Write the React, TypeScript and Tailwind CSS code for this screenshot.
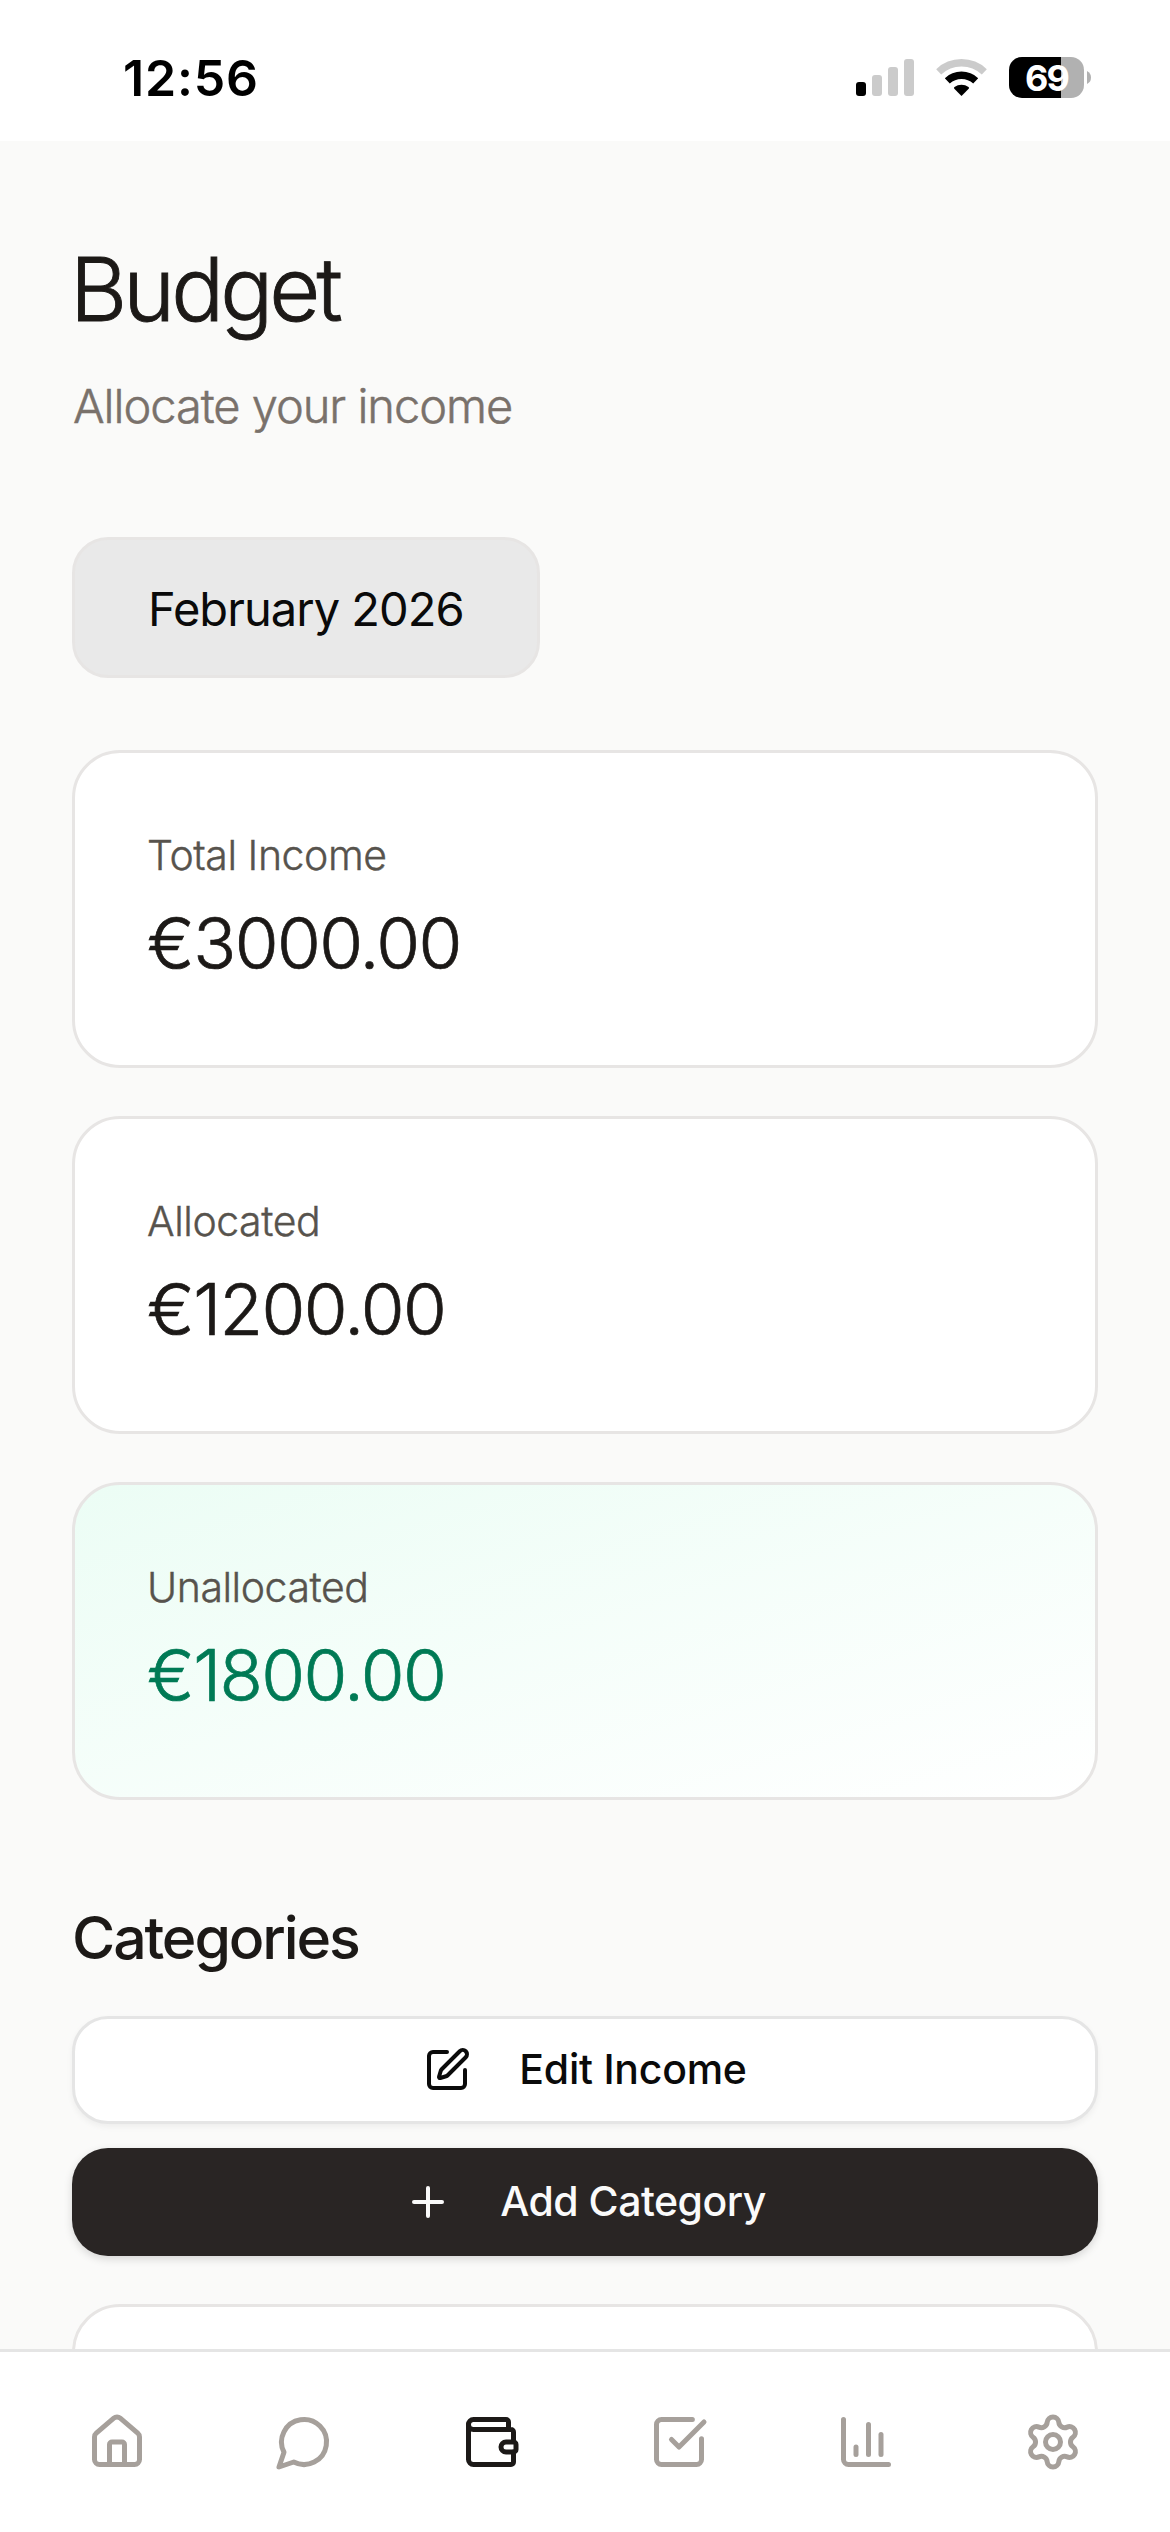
import React from "react";
import { ChartColumn, House, Plus, Settings, SquareCheckBig, SquarePen, Wallet } from "lucide-react";

const SignalIcon: React.FC = () => (
  <svg width="58" height="37" viewBox="0 0 58 37">
    <rect x="0" y="23" width="10" height="14" rx="3" fill="#000" />
    <rect x="16" y="16" width="10" height="21" rx="3" fill="#cbcbcb" />
    <rect x="32" y="8" width="10" height="29" rx="3" fill="#cbcbcb" />
    <rect x="48" y="0" width="10" height="37" rx="3" fill="#cbcbcb" />
  </svg>
);

const WifiIcon: React.FC = () => (
  <svg width="51" height="37" viewBox="0 0 51 37" fill="none" strokeWidth="7.3">
    <path d="M2.7 12.8a33.3 33.3 0 0 1 45.6 0" stroke="#cbcbcb" />
    <path d="M11.3 21.9a20.7 20.7 0 0 1 28.4 0" stroke="#000" />
    <path d="M25.5 37l-7.2-7.2q-.8-.9.2-1.7a11.6 11.6 0 0 1 14 0q1 .8.2 1.7z" fill="#000" />
  </svg>
);

const BatteryIcon: React.FC = () => (
  <div className="flex items-center">
    <div className="flex h-[41px] w-[75px] items-center justify-center rounded-[13px] bg-[linear-gradient(to_right,#000_52px,#b1b1b1_52px)]">
      <span className="text-[36px] leading-none font-bold tracking-[-1.8px] text-white">69</span>
    </div>
    <svg className="ml-[3px]" width="4" height="13" viewBox="0 0 4 13">
      <path d="M0 0q4 2 4 6.500q0 4.500-4 6.500z" fill="#b1b1b1" />
    </svg>
  </div>
);

const ChatIcon: React.FC = () => (
  <svg
    className="h-[60px] w-[60px]"
    viewBox="0 0 24 24"
    fill="none"
    stroke="currentColor"
    strokeWidth="2"
    strokeLinecap="round"
    strokeLinejoin="round"
  >
    <path d="M7.9 20A9 9 0 1 0 4 16.1L2 22Z" />
  </svg>
);

interface SummaryCardProps {
  label: string;
  amount: string;
  highlight?: boolean;
}

const SummaryCard: React.FC<SummaryCardProps> = ({ label, amount, highlight }) => (
  <div
    className={`h-[318px] rounded-[48px] border-[3px] border-stone-200 px-[72px] pt-[72px] ${
      highlight ? "bg-linear-to-br from-emerald-50 to-white" : "bg-white"
    }`}
  >
    <p className="text-[41px] leading-[60px] font-light tracking-[-0.45px] text-stone-600 [-webkit-text-stroke:0.4px]">
      {label}
    </p>
    <p
      className={`mt-[10px] text-[71px] leading-[96px] font-light tracking-[-1.6px] [-webkit-text-stroke:0.7px] ${
        highlight ? "text-emerald-700" : "text-stone-900"
      }`}
    >
      {amount}
    </p>
  </div>
);

export default function App() {
  return (
    <div className="flex h-[2532px] w-[1170px] flex-col overflow-hidden bg-stone-50 font-['Inter',sans-serif]">
      <header className="flex h-[141px] shrink-0 items-start justify-between bg-white pr-[79px] pl-[123px]">
        <span className="mt-[48px] text-[50px] leading-[60px] font-semibold tracking-[0.8px] text-black">12:56</span>
        <div className="mt-[57px] flex items-center">
          <SignalIcon />
          <div className="ml-[22px]">
            <WifiIcon />
          </div>
          <div className="ml-[22px]">
            <BatteryIcon />
          </div>
        </div>
      </header>

      <main className="min-h-0 flex-1 overflow-hidden px-[72px] pt-[94px]">
        <h1 className="-ml-[2px] text-[88px] leading-[108px] font-light tracking-[-3.9px] text-stone-900 [-webkit-text-stroke:0.9px]">
          Budget
        </h1>
        <p className="mt-[27px] ml-px text-[47px] leading-[72px] font-light tracking-[-1.04px] text-stone-500 [-webkit-text-stroke:0.5px]">
          Allocate your income
        </p>

        <button className="mt-[95px] flex h-[141px] w-[468px] items-center rounded-[36px] border-[3px] border-stone-200 bg-[#e9e9e9] pt-[3px] pl-[73px] text-[47px] tracking-[-0.96px] whitespace-nowrap text-neutral-950">
          February 2026
        </button>

        <div className="mt-[72px] flex flex-col gap-[48px]">
          <SummaryCard label="Total Income" amount="€3000.00" />
          <SummaryCard label="Allocated" amount="€1200.00" />
          <SummaryCard label="Unallocated" amount="€1800.00" highlight />
        </div>

        <h2 className="mt-[96px] text-[59px] leading-[84px] font-medium tracking-[-2.14px] text-stone-900">Categories</h2>

        <div className="mt-[36px] flex flex-col gap-[24px]">
          <button className="flex h-[108px] items-center justify-center gap-[48px] rounded-[36px] border-[3px] border-neutral-200 bg-white text-[41px] font-medium tracking-[-0.25px] text-neutral-950 shadow-[0_3px_6px_rgba(0,0,0,0.05)]">
            <SquarePen className="h-[48px] w-[48px]" />
            Edit Income
          </button>
          <button className="flex h-[108px] items-center justify-center gap-[48px] rounded-[36px] bg-stone-800 text-[41px] font-medium tracking-[-0.5px] text-neutral-50 shadow-[0_3px_9px_rgba(0,0,0,0.15)]">
            <Plus className="h-[48px] w-[48px]" />
            Add Category
          </button>
        </div>

        <div className="mt-[48px] h-[318px] rounded-[48px] border-[3px] border-stone-200 bg-white" />
      </main>

      <nav className="flex h-[183px] shrink-0 justify-between border-t-[3px] border-neutral-200 bg-white px-[87px] pt-[60px] text-stone-400">
        <House className="h-[60px] w-[60px]" />
        <ChatIcon />
        <Wallet className="h-[60px] w-[60px] text-stone-900" />
        <SquareCheckBig className="h-[60px] w-[60px]" />
        <ChartColumn className="h-[60px] w-[60px]" />
        <Settings className="h-[60px] w-[60px]" />
      </nav>
    </div>
  );
}
